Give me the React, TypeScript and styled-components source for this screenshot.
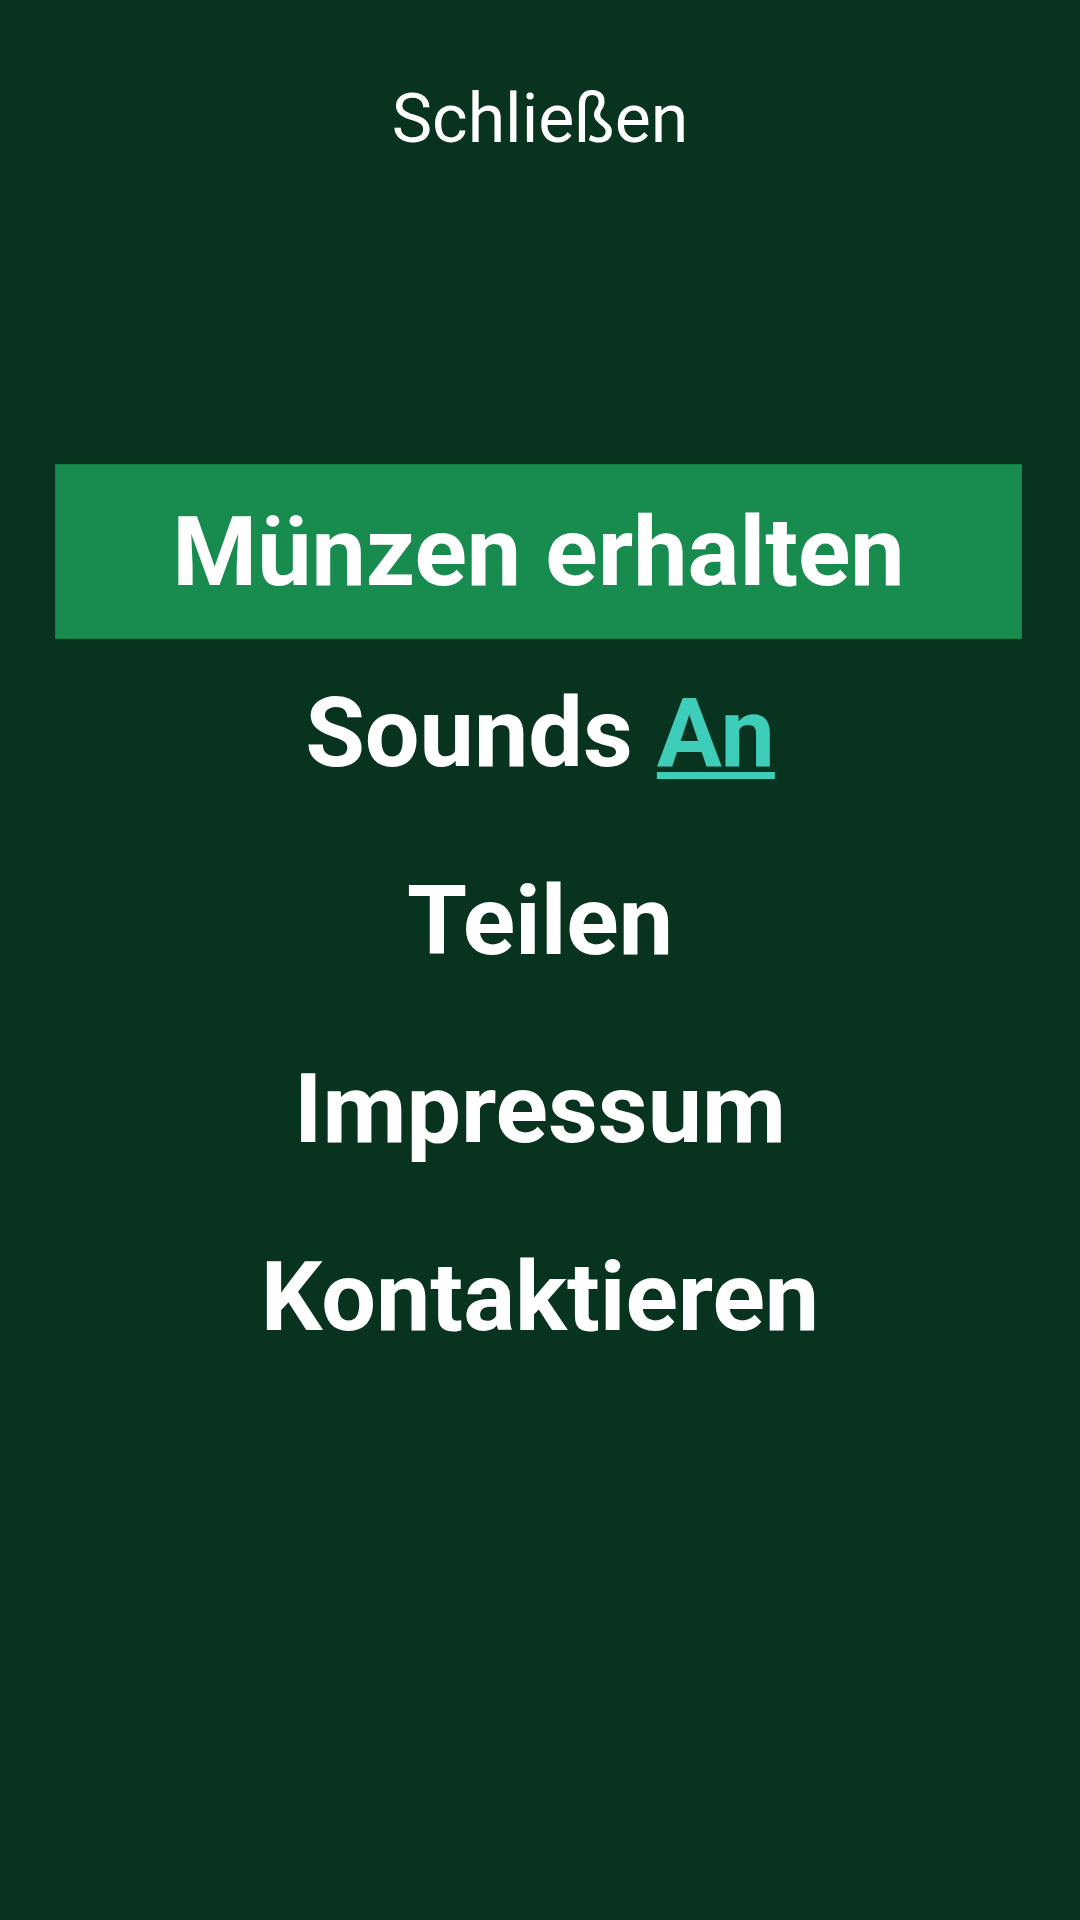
import React, { FC } from 'react';
import styled, { createGlobalStyle } from 'styled-components';

const BG = '#07331f';
const ACCENT = '#178c4e';
const TEAL = '#3ecdb9';

const GlobalStyle = createGlobalStyle`
  html, body {
    margin: 0;
    padding: 0;
    background-color: ${BG};
  }
  body {
    font-family: Roboto, 'Noto Sans', sans-serif;
  }
`;

type MenuItem = {
  label: string;
  highlighted?: boolean;
  toggle?: string;
};

const items: MenuItem[] = [
  { label: 'Münzen erhalten', highlighted: true },
  { label: 'Sounds', toggle: 'An' },
  { label: 'Teilen' },
  { label: 'Impressum' },
  { label: 'Kontaktieren' },
];

const App: FC = () => {
  return (
    <Page>
      <GlobalStyle />
      <Header>
        <CloseButton>Schließen</CloseButton>
      </Header>
      <Menu>
        {items.map((item) => (
          <Item key={item.label} highlighted={!!item.highlighted}>
            {item.label}
            {item.toggle && (
              <>
                {' '}
                <Toggle>{item.toggle}</Toggle>
              </>
            )}
          </Item>
        ))}
      </Menu>
    </Page>
  );
};

export default App;

const Page = styled.div`
  width: 1080px;
  min-height: 1920px;
  background-color: ${BG};
  display: flex;
  flex-direction: column;
  color: #fff;
`;

const Header = styled.header`
  display: flex;
  justify-content: center;
  padding-top: 79px;
  height: 464px;
  box-sizing: border-box;
`;

const CloseButton = styled.div`
  font-size: 68px;
  font-weight: 400;
  line-height: 80px;
  height: 80px;
  cursor: pointer;
`;

const Menu = styled.nav`
  display: flex;
  flex-direction: column;
`;

const Item = styled.div<{ highlighted: boolean }>`
  font-size: 97px;
  font-weight: 700;
  line-height: 112px;
  text-align: center;
  white-space: nowrap;
  cursor: pointer;
  ${({ highlighted }) =>
    highlighted
      ? `
    background-color: ${ACCENT};
    margin: 0 58px 0 55px;
    padding: 32px 0 31px;
    box-shadow: inset 0 0 0 1px rgba(0, 0, 0, 0.08);
  `
      : `
    padding: 38px 0 38px;
  `}
`;

const Toggle = styled.span`
  color: ${TEAL};
  text-decoration: underline;
  text-decoration-thickness: 7px;
  text-underline-offset: 6px;
`;
